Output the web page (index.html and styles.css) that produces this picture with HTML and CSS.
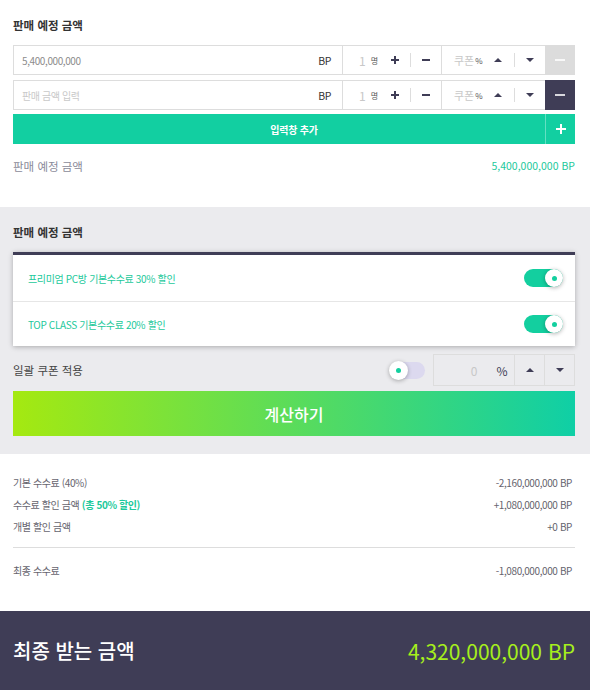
FILE: index.html
```html
<!DOCTYPE html>
<html lang="ko">
<head>
<meta charset="utf-8">
<link rel="stylesheet" href="styles.css">
</head>
<body>
<div class="page">
  <section class="sec sec-input">
    <h2 class="title">판매 예정 금액</h2>
    <div class="rows">
      <div class="row">
        <div class="amount"><span class="val">5,400,000,000</span><span class="bp">BP</span></div>
        <div class="count">
          <span class="num">1</span><span class="unit-sm">명</span>
          <svg class="ic ic-plus" width="8" height="8" viewBox="0 0 8 8"><path d="M4 0V8M0 4H8" stroke="#3f3d56" stroke-width="2"/></svg>
          <span class="vsep"></span>
          <svg class="ic" width="8" height="8" viewBox="0 0 8 8"><path d="M0 4H8" stroke="#3f3d56" stroke-width="2"/></svg>
        </div>
        <div class="coupon">
          <span class="cp">쿠폰</span><span class="pct-sm">%</span>
          <span class="tri-up"></span>
          <span class="vsep vsep-c"></span>
          <span class="tri-down"></span>
        </div>
        <div class="remove"><svg width="10" height="10" viewBox="0 0 10 10"><path d="M0 5H10" stroke="#fff" stroke-width="1.6"/></svg></div>
      </div>
      <div class="row">
        <div class="amount"><span class="ph">판매 금액 입력</span><span class="bp">BP</span></div>
        <div class="count">
          <span class="num">1</span><span class="unit-sm">명</span>
          <svg class="ic ic-plus" width="8" height="8" viewBox="0 0 8 8"><path d="M4 0V8M0 4H8" stroke="#3f3d56" stroke-width="2"/></svg>
          <span class="vsep"></span>
          <svg class="ic" width="8" height="8" viewBox="0 0 8 8"><path d="M0 4H8" stroke="#3f3d56" stroke-width="2"/></svg>
        </div>
        <div class="coupon">
          <span class="cp">쿠폰</span><span class="pct-sm">%</span>
          <span class="tri-up"></span>
          <span class="vsep vsep-c"></span>
          <span class="tri-down"></span>
        </div>
        <div class="remove remove-dark"><svg width="10" height="10" viewBox="0 0 10 10"><path d="M0 5H10" stroke="#fff" stroke-width="1.6"/></svg></div>
      </div>
    </div>
    <div class="add">
      <span class="add-label">입력창 추가</span>
      <span class="add-plus"><svg width="10" height="10" viewBox="0 0 10 10"><path d="M5 0V10M0 5H10" stroke="#fff" stroke-width="2"/></svg></span>
    </div>
    <div class="summary"><span class="sum-label">판매 예정 금액</span><span class="green">5,400,000,000 BP</span></div>
  </section>

  <section class="sec sec-gray">
    <h2 class="title">판매 예정 금액</h2>
    <div class="card">
      <div class="card-row"><span class="opt">프리미엄 PC방 기본수수료 30% 할인</span><span class="tog tog-on"><span class="knob"><span class="dot"></span></span></span></div>
      <div class="card-row"><span class="opt">TOP CLASS 기본수수료 20% 할인</span><span class="tog tog-on"><span class="knob"><span class="dot"></span></span></span></div>
    </div>
    <div class="bulk">
      <span class="bulk-label">일괄 쿠폰 적용</span>
      <span class="tog tog-off"><span class="knob"><span class="dot"></span></span></span>
      <div class="bbox">
        <div class="bval"><span class="bnum">0</span><span class="bpct">%</span></div>
        <div class="bbtn"><span class="tri-up"></span></div>
        <div class="bbtn"><span class="tri-down"></span></div>
      </div>
    </div>
    <div class="calc">계산하기</div>
  </section>

  <section class="sec sec-result">
    <div class="res-row"><span>기본 수수료 (40%)</span><span class="rv">-2,160,000,000 BP</span></div>
    <div class="res-row"><span>수수료 할인 금액 <b class="gb">(총 50% 할인)</b></span><span class="rv">+1,080,000,000 BP</span></div>
    <div class="res-row"><span>개별 할인 금액</span><span class="rv">+0 BP</span></div>
    <div class="res-line"></div>
    <div class="res-row res-final"><span>최종 수수료</span><span class="rv">-1,080,000,000 BP</span></div>
  </section>

  <footer class="foot">
    <span class="foot-label">최종 받는 금액</span>
    <span class="foot-val">4,320,000,000 BP</span>
  </footer>
</div>
</body>
</html>
```

FILE: styles.css
```css
* { box-sizing: border-box; }
body {
  margin: 0;
  background: #fff;
  color: #333;
  font-family: "Noto Sans CJK KR", "Noto Sans", sans-serif;
  letter-spacing: 0;
}
.sec { padding-left: 13px; padding-right: 15px; }
.title {
  margin: 0;
  font-size: 11.5px;
  font-weight: 700;
  line-height: 16px;
  color: #333;
}
.sec-input { padding-top: 17px; padding-bottom: 33px; }
.rows { margin-top: 12px; display: flex; flex-direction: column; gap: 5px; }
.row { display: flex; height: 30px; }
.amount {
  flex: 1;
  min-width: 0;
  border: 1px solid #ddd;
  display: flex;
  align-items: center;
  justify-content: space-between;
  padding: 0 11px 0 8px;
  font-size: 10px;
  letter-spacing: -0.04em;
}
.val { color: #8c8c8c; }
.ph { color: #c9c9c9; }
.bp { color: #333; font-size: 10.5px; }
.count {
  width: 99px;
  flex: none;
  border-top: 1px solid #ddd;
  border-bottom: 1px solid #ddd;
  border-right: 1px solid #ddd;
  display: flex;
  align-items: center;
  padding-left: 16px;
}
.num { font-size: 12px; color: #c8c8c8; }
.unit-sm { font-size: 8px; color: #555; margin-left: 5px; }
.ic { display: block; flex: none; }
.ic-plus { margin-left: 13px; }
.vsep { width: 1px; height: 14px; background: #ddd; margin: 0 11px; flex: none; }
.coupon {
  width: 103px;
  flex: none;
  border-top: 1px solid #ddd;
  border-bottom: 1px solid #ddd;
  display: flex;
  align-items: center;
  padding-left: 12px;
}
.cp { font-size: 11px; color: #c8c8c8; }
.pct-sm { font-size: 8px; color: #555; margin-left: 1px; }
.coupon .tri-up { margin-left: 11px; }
.vsep-c { margin: 0 11px 0 12px; }
.tri-up {
  display: block;
  width: 0; height: 0;
  border-left: 4px solid transparent;
  border-right: 4px solid transparent;
  border-bottom: 4px solid #3f3d56;
}
.tri-down {
  display: block;
  width: 0; height: 0;
  border-left: 4px solid transparent;
  border-right: 4px solid transparent;
  border-top: 4px solid #3f3d56;
}
.remove {
  width: 30px;
  flex: none;
  background: #dcdcdc;
  display: flex;
  align-items: center;
  justify-content: center;
}
.remove svg { display: block; }
.remove-dark { background: #3f3d56; }
.add {
  margin-top: 4px;
  height: 30px;
  background: #12cfa1;
  display: flex;
  color: #fff;
}
.add-label {
  flex: 1;
  padding-left: 30px;
  display: flex;
  align-items: center;
  justify-content: center;
  font-size: 10px;
  font-weight: 700;
  letter-spacing: -0.02em;
}
.add-plus {
  width: 30px;
  border-left: 1px solid rgba(255,255,255,0.35);
  display: flex;
  align-items: center;
  justify-content: center;
}
.add-plus svg { display: block; }
.summary {
  margin-top: 14px;
  display: flex;
  justify-content: space-between;
  align-items: center;
  font-size: 10.5px;
  line-height: 16px;
  color: #8a8a99;
}
.sum-label { font-size: 11.5px; }
.green { color: #1cc99b; }

.sec-gray { background: #ebebee; padding-top: 17px; padding-bottom: 18px; }
.card {
  margin-top: 12px;
  background: #fff;
  border-top: 3px solid #3f3d56;
  box-shadow: 0 1px 5px rgba(0,0,0,0.28);
}
.card-row {
  height: 46px;
  display: flex;
  align-items: center;
  justify-content: space-between;
  padding: 0 12px 0 15px;
}
.card-row + .card-row { border-top: 1px solid #e6e6e6; height: 45px; }
.opt { font-size: 10px; color: #1cc99b; letter-spacing: -0.035em; }
.tog { display: flex; align-items: center; flex: none; }
.tog-on {
  width: 39px; height: 18px;
  border-radius: 9px;
  background: #13cf9f;
  justify-content: flex-end;
}
.tog-off {
  width: 35px; height: 17px;
  border-radius: 9px;
  background: #dcd9ef;
  justify-content: flex-start;
  margin-left: auto;
}
.knob {
  width: 18px; height: 18px;
  border-radius: 50%;
  background: #fff;
  box-shadow: 0 1px 4px rgba(0,0,0,0.3);
  display: flex;
  align-items: center;
  justify-content: center;
  flex: none;
}
.tog-off .knob { width: 19px; height: 19px; margin-left: -1px; }
.dot { width: 5px; height: 5px; border-radius: 50%; background: #13cf9f; }
.bulk {
  margin-top: 8px;
  height: 32px;
  display: flex;
  align-items: center;
}
.bulk-label { font-size: 11.5px; color: #444; }
.bbox {
  margin-left: 8px;
  width: 142px;
  height: 32px;
  border: 1px solid #ddd;
  display: flex;
}
.bval {
  width: 81px;
  display: flex;
  align-items: center;
  justify-content: flex-end;
  padding-right: 7px;
  font-size: 12px;
}
.bnum { color: #c8c8c8; margin-right: 19px; }
.bpct { color: #3f3d56; }
.bbtn {
  width: 30px;
  border-left: 1px solid #ddd;
  display: flex;
  align-items: center;
  justify-content: center;
}
.calc {
  margin-top: 5px;
  height: 45px;
  background: linear-gradient(90deg, #a5e910 0%, #0fcfa6 100%);
  color: #fff;
  font-size: 16px;
  font-weight: 500;
  display: flex;
  align-items: center;
  justify-content: center;
}

.sec-result { padding-top: 18px; padding-bottom: 29px; }
.res-row {
  display: flex;
  justify-content: space-between;
  font-size: 10px;
  line-height: 22px;
  color: #66646e;
  padding-right: 3px;
  letter-spacing: -0.04em;
}
.gb { color: #1cc99b; font-weight: 700; }
.rv { color: #66646e; }
.res-line { margin-top: 9px; height: 1px; background: #ddd; }
.res-final { margin-top: 12px; }

.foot {
  height: 79px;
  background: #3f3d56;
  display: flex;
  align-items: center;
  justify-content: space-between;
  padding: 0 15px 0 13px;
  font-size: 20px;
}
.foot-label { color: #fff; font-weight: 500; }
.foot-val { color: #a6ef1c; font-weight: 400; font-size: 21px; }
```
